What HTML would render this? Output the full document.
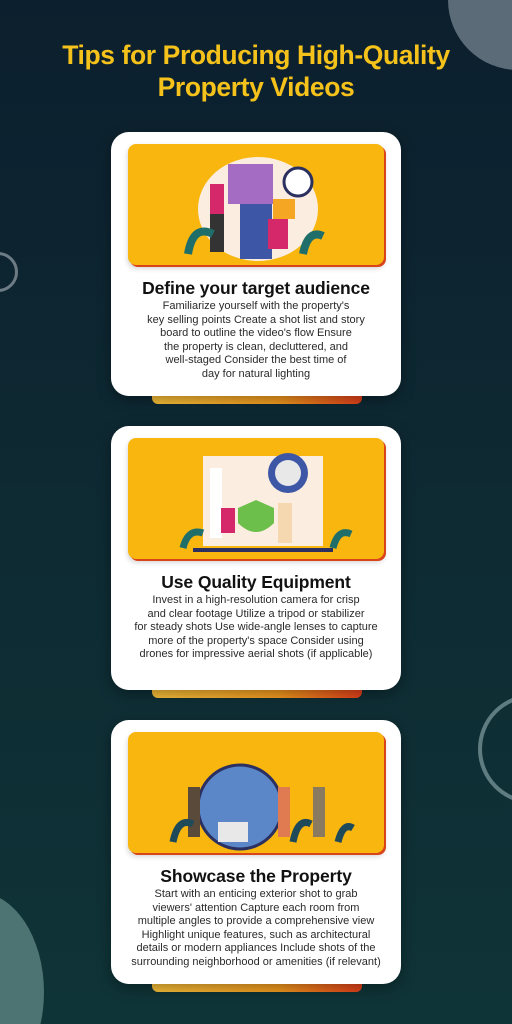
<!DOCTYPE html>
<html><head><meta charset="utf-8"><style>
*{margin:0;padding:0;box-sizing:border-box}
html,body{width:512px;height:1024px;overflow:hidden;background:#0f3437}
#w{position:relative;width:512px;height:1024px;overflow:hidden;background:linear-gradient(180deg,#0c1f2e 0%,#0e2a33 50%,#0f3437 100%);font-family:"Liberation Sans",sans-serif}
h1{position:absolute;top:39px;left:0;width:512px;text-align:center;color:#f5c21b;font-size:26.5px;line-height:32px;font-weight:bold;letter-spacing:-0.4px}
.card{position:absolute;left:111px;width:290px;height:264px;background:#fff;border-radius:18px;box-shadow:0 4px 14px rgba(0,0,0,.35)}
.tab{position:absolute;left:152px;width:210px;height:12px;border-radius:0 0 6px 6px;background:linear-gradient(90deg,#f7c03a,#f29a1e 60%,#e2401a)}
.panel{position:absolute;left:17px;top:12px;width:256px;height:121px;border-radius:8px;background:#f8b60f;box-shadow:2px 2px 0 #d9441a,0 3px 6px rgba(0,0,0,.2);overflow:hidden}
.t{position:absolute;left:0;top:146px;width:290px;text-align:center;font-weight:bold;font-size:17.5px;line-height:20px;color:#111;letter-spacing:-0.1px}
.p{position:absolute;left:8px;top:168px;width:274px;text-align:center;font-size:11px;line-height:13.5px;color:#2a2a2a}
</style></head><body><div id="w">
<svg style="position:absolute;left:0;top:0" width="512" height="1024">
<circle cx="518" cy="0" r="70" fill="#5b6b78"/>
<circle cx="-2" cy="272" r="18.5" fill="none" stroke="#6d7c84" stroke-width="3"/>
<circle cx="533" cy="749" r="53" fill="none" stroke="#5f7d80" stroke-width="4"/>
<ellipse cx="-23" cy="992" rx="67" ry="100" fill="#4e7373"/>
</svg>
<h1>Tips for Producing High-Quality<br>Property Videos</h1>

<div class="tab" style="top:392px"></div>
<div class="card" style="top:132px">
<div class="panel"><svg width="256" height="121">
<ellipse cx="130" cy="65" rx="60" ry="52" fill="#fbeee0"/>
<rect x="100" y="20" width="45" height="40" fill="#a46cc2"/>
<rect x="112" y="60" width="32" height="55" fill="#3e56a6"/>
<circle cx="170" cy="38" r="14" fill="#fff" stroke="#2b3060" stroke-width="3"/>
<rect x="82" y="40" width="14" height="30" fill="#d4286a"/><rect x="82" y="70" width="14" height="38" fill="#333"/>
<rect x="145" y="55" width="22" height="20" fill="#f5a623"/><rect x="140" y="75" width="20" height="30" fill="#d4286a"/>
<path d="M60 110 q5-30 25-20 M175 110 q5-25 20-18" stroke="#1f6e6a" stroke-width="8" fill="none"/>
</svg></div>
<div class="t">Define your target audience</div>
<div class="p">Familiarize yourself with the property's<br>key selling points Create a shot list and story<br>board to outline the video's flow Ensure<br>the property is clean, decluttered, and<br>well-staged Consider the best time of<br>day for natural lighting</div>
</div>

<div class="tab" style="top:686px"></div>
<div class="card" style="top:426px">
<div class="panel"><svg width="256" height="121">
<rect x="75" y="18" width="120" height="90" fill="#fbeee0"/>
<circle cx="160" cy="35" r="20" fill="#3e56a6"/><circle cx="160" cy="35" r="13" fill="#e8e8e8"/>
<rect x="82" y="30" width="12" height="70" fill="#fff"/>
<path d="M110 70 l18 -8 l18 8 v15 q-18 18 -36 0z" fill="#6cbf4a"/>
<rect x="93" y="70" width="14" height="25" fill="#d4286a"/><rect x="150" y="65" width="14" height="40" fill="#f5d7b0"/>
<rect x="65" y="110" width="140" height="4" fill="#2b3060"/>
<path d="M55 110 q5-20 20-15 M205 110 q5-20 18-14" stroke="#1f6e6a" stroke-width="7" fill="none"/>
</svg></div>
<div class="t">Use Quality Equipment</div>
<div class="p">Invest in a high-resolution camera for crisp<br>and clear footage Utilize a tripod or stabilizer<br>for steady shots Use wide-angle lenses to capture<br>more of the property's space Consider using<br>drones for impressive aerial shots (if applicable)</div>
</div>

<div class="tab" style="top:980px"></div>
<div class="card" style="top:720px">
<div class="panel"><svg width="256" height="121">
<ellipse cx="112" cy="75" rx="42" ry="42" fill="#5b86c7" stroke="#2b3060" stroke-width="3"/>
<rect x="90" y="90" width="30" height="20" fill="#e8e8e8"/>
<rect x="60" y="55" width="12" height="50" fill="#5a4a3a"/><rect x="150" y="55" width="12" height="50" fill="#e07a50"/><rect x="185" y="55" width="12" height="50" fill="#8a7a60"/>
<path d="M45 110 q5-25 20-18 M165 110 q5-25 18-18 M210 110 q5-20 15-14" stroke="#1f4a5a" stroke-width="7" fill="none"/>
</svg></div>
<div class="t">Showcase the Property</div>
<div class="p">Start with an enticing exterior shot to grab<br>viewers' attention Capture each room from<br>multiple angles to provide a comprehensive view<br>Highlight unique features, such as architectural<br>details or modern appliances Include shots of the<br>surrounding neighborhood or amenities (if relevant)</div>
</div>
</div></body></html>
